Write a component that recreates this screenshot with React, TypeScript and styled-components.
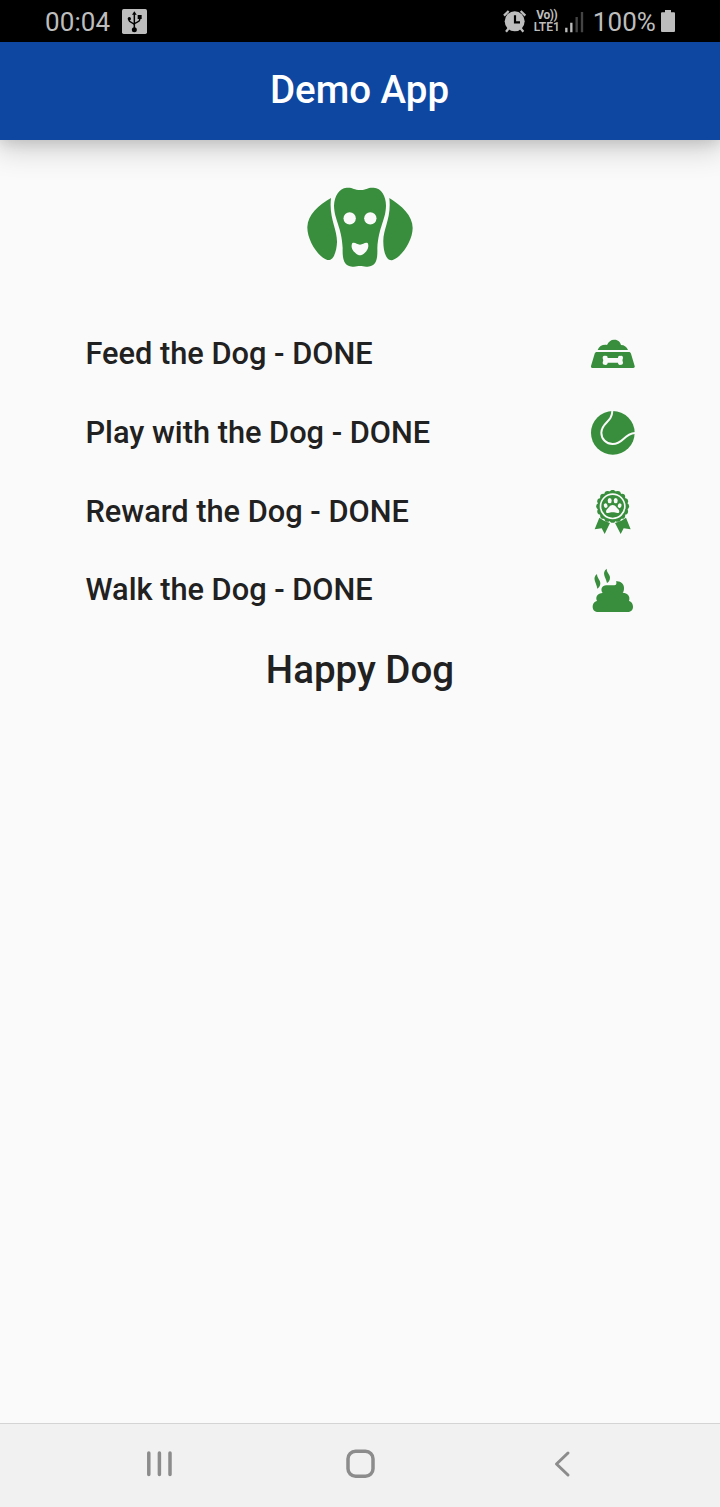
import React from "react";
import styled, { createGlobalStyle } from "styled-components";

const GlobalStyle = createGlobalStyle`
  *, *::before, *::after { box-sizing: border-box; }
  body { margin: 0; background: #fafafa; }
`;

const green = "#388e3c";

const Screen = styled.div`
  display: flex;
  flex-direction: column;
  width: 720px;
  height: 1507px;
  background: #fafafa;
  color: #212121;
  font-family: Roboto, sans-serif;
  overflow: hidden;
`;

const StatusBar = styled.div`
  display: flex;
  align-items: center;
  justify-content: space-between;
  flex: none;
  height: 42px;
  padding: 2px 45px 0 45px;
  background: #000;
  color: #bdbdbd;
`;

const StatusGroup = styled.div`
  display: flex;
  align-items: center;
`;

const StatusText = styled.span`
  font-size: 26px;
  line-height: 40px;
  letter-spacing: ${(p: { $spacing?: string }) => p.$spacing ?? "0"};
`;

const UsbIcon = styled.svg`
  width: 25px;
  height: 25px;
  margin: -1px 0 0 11.5px;
`;

const AlarmIcon = styled.svg`
  width: 24px;
  height: 24px;
  margin: -2px 6px 0 0;
`;

const Carrier = styled.div`
  display: flex;
  flex-direction: column;
  align-items: center;
  width: 28px;
  margin-right: 3px;
  margin-top: -2px;
  font-size: 12px;
  font-weight: 600;
  line-height: 12px;
  white-space: nowrap;
`;

const VoiceLabel = styled.span`
  font-weight: 700;
  letter-spacing: -0.5px;
`;

const SignalIcon = styled.svg`
  width: 20px;
  height: 22px;
  margin: -1px 9px 0 0;
`;

const BatteryIcon = styled.svg`
  width: 14px;
  height: 22px;
  margin: -3px 0 0 5px;
`;

const AppBar = styled.header`
  display: flex;
  align-items: center;
  justify-content: center;
  flex: none;
  height: 98px;
  background: #0d47a1;
  color: #fff;
  box-shadow: 0 3px 12px rgba(0, 0, 0, 0.1), 0 6px 28px 3px rgba(0, 0, 0, 0.19);
  clip-path: inset(0 0 -50px 0);
`;

const Title = styled.h1`
  margin: 0;
  padding: 0 1px 2px 0;
  font-size: 38.5px;
  font-weight: 500;
  line-height: 46px;
`;

const Content = styled.main`
  display: flex;
  flex-direction: column;
  flex: 1;
  padding-top: 34px;
`;

const DogIcon = styled.svg`
  align-self: center;
  width: 140px;
  height: 110px;
`;

const TaskList = styled.ul`
  margin: 30.85px 0 0;
  padding: 0 85px 0 85.5px;
  list-style: none;
`;

const Task = styled.li`
  display: flex;
  align-items: center;
  justify-content: space-between;
  height: 78.75px;
`;

const TaskLabel = styled.span`
  font-size: 30.75px;
  font-weight: 500;
  line-height: 36px;
`;

const TaskIcon = styled.svg`
  width: 44px;
  height: 44px;
  fill: ${green};
`;

const Mood = styled.h2`
  margin: 17.4px 0 0;
  text-align: center;
  font-size: 38.5px;
  font-weight: 500;
  line-height: 46px;
`;

const NavBar = styled.nav`
  display: flex;
  align-items: center;
  justify-content: space-between;
  flex: none;
  height: 84px;
  padding: 0 144px 3px;
  border-top: 1px solid #d4d4d4;
  background: #f1f1f1;
`;

const NavIcon = styled.svg`
  width: 30px;
  height: 30px;
  fill: none;
  stroke: #8c8c8c;
  stroke-width: 3.5;
  stroke-linecap: round;
  stroke-linejoin: round;
`;

const paw = (
  <g fill="#fafafa">
    <path d="M98 74C89 74 86 83 81 87C76 92 78 99 84 98C89 97 92 96 98 96C104 96 107 97 112 98C118 99 120 92 115 87C110 83 107 74 98 74Z" />
    <ellipse cx="89" cy="61" rx="6" ry="8" />
    <ellipse cx="107" cy="61" rx="6" ry="8" />
    <ellipse cx="77" cy="76" rx="5.5" ry="7" transform="rotate(-20 77 76)" />
    <ellipse cx="119" cy="76" rx="5.5" ry="7" transform="rotate(20 119 76)" />
  </g>
);

const scallops = Array.from({ length: 16 }, (_, i) => {
  const a = (i * Math.PI) / 8;
  return <circle key={i} cx={98 + 40 * Math.cos(a)} cy={78 + 40 * Math.sin(a)} r="9.3" />;
});

const tasks = [
  {
    label: "Feed the Dog - DONE",
    viewBox: "33 6 132 132",
    drawing: (
      <>
        <path d="M53 60C57 49 68 43 81 45C86 34 94 28 104 29C114 29 121 36 123 45C133 45 141 51 144 60Z" />
        <path d="M51 66H146C150 66 152 68 153 71L164 108C165 111 163 114 160 114H37C34 114 32 111 33 108L44 71C45 68 47 66 51 66Z" />
        <path
          fill="#fafafa"
          d="M83 84H114C114 78 118 76 122 78C127 76 131 82 128 88C127 90 127 92 128 94C131 100 127 106 122 104C118 106 114 103 114 98H83C83 103 79 106 75 104C70 106 66 100 69 94C70 92 70 90 69 88C66 82 70 76 75 78C79 76 83 78 83 84Z"
        />
      </>
    ),
  },
  {
    label: "Play with the Dog - DONE",
    viewBox: "33 32 132 132",
    drawing: (
      <>
        <circle cx="98.5" cy="97.5" r="65.5" />
        <path
          d="M97 30C97 67 65 65 64 97C64 116 79 131 98 131C131 131 129 101 166 98"
          fill="none"
          stroke="#fafafa"
          strokeWidth="6"
        />
      </>
    ),
  },
  {
    label: "Reward the Dog - DONE",
    viewBox: "33 29 132 132",
    drawing: (
      <>
        <path d="M58 112L72 121L90 128L74 161L65 144L44 147Z" />
        <path d="M138 112L124 121L105 128L122 161L131 144L152 147Z" />
        <circle cx="98" cy="78" r="45" />
        {scallops}
        <circle cx="98" cy="78" r="36.5" fill="none" stroke="#fafafa" strokeWidth="5" />
        {paw}
      </>
    ),
  },
  {
    label: "Walk the Dog - DONE",
    viewBox: "33 24 132 132",
    drawing: (
      <>
        <path d="M108 64C122 62 132 72 132 83C132 90 131 95 128 98C143 98 152 109 147 123C154 124 159 132 159 140C159 150 152 156 142 156H55C45 156 38 150 38 140C38 132 43 124 51 123C45 110 53 100 68 99C60 89 66 76 79 76H103C109 76 111 71 108 64Z" />
        <path d="M51 42C35 55 49 66 52 86C57 83 61 77 61 70C61 60 51 54 51 42Z" />
        <path d="M80 26C64 39 77 50 81 69C86 66 90 60 90 53C90 43 80 38 80 26Z" />
      </>
    ),
  },
];

export default function App() {
  return (
    <>
      <GlobalStyle />
      <Screen>
        <StatusBar>
          <StatusGroup>
            <StatusText $spacing="0.1px">00:04</StatusText>
            <UsbIcon viewBox="366 27 75 75">
              <rect x="366" y="27" width="75" height="75" rx="5" fill="#bdbdbd" />
              <g stroke="#000" strokeWidth="4.5" fill="none">
                <path d="M403 42V86M387 54V61C387 68 403 68 403 75M419 51V60C419 67 403 67 403 73" />
              </g>
              <path d="M403 34L410 44H396Z" />
              <circle cx="403" cy="89" r="7.5" />
              <circle cx="388" cy="56" r="5" />
              <path d="M413 45H425V57H413Z" />
            </UsbIcon>
          </StatusGroup>
          <StatusGroup>
            <AlarmIcon viewBox="38 26 72 72">
              <path d="M47 94L56 83M99 94L90 83" stroke="#bdbdbd" strokeWidth="7" />
              <circle cx="73" cy="63" r="30" fill="#bdbdbd" />
              <path d="M41 46L55 32M105 46L91 32" stroke="#bdbdbd" strokeWidth="7" />
              <path d="M74 45V66H89" fill="none" stroke="#000" strokeWidth="6.5" />
            </AlarmIcon>
            <Carrier>
              <VoiceLabel>Vo))</VoiceLabel>
              <span>LTE1</span>
            </Carrier>
            <SignalIcon viewBox="222 30 60 66">
              <path d="M229 80V94M244 65V94" stroke="#bdbdbd" strokeWidth="7" />
              <path d="M260 48V94M276 33V94" stroke="#444" strokeWidth="7" />
            </SignalIcon>
            <StatusText $spacing="0.1px">100%</StatusText>
            <BatteryIcon viewBox="513 29 42 66">
              <path
                fill="#bdbdbd"
                d="M525 29H543V36H552Q555 36 555 39V92Q555 95 552 95H516Q513 95 513 92V39Q513 36 516 36H525Z"
              />
            </BatteryIcon>
          </StatusGroup>
        </StatusBar>
        <AppBar>
          <Title>Demo App</Title>
        </AppBar>
        <Content>
          <DogIcon viewBox="0 12 420 330">
            <g fill={green}>
              <path d="M123 84C86 104 53 135 52 171C51 209 83 261 112 270C132 274 140 241 141 217C142 177 116 143 123 84Z" />
              <path d="M298 84C335 107 368 137 368 174C368 210 337 260 308 270C288 275 280 242 280 217C278 177 305 145 298 84Z" />
              <path d="M170 53C190 52 191 60 211 60C230 60 231 52 251 53C274 54 288 78 288 107C287 150 266 170 262 234C263 266 260 289 233 290C222 291 218 288 210 288C202 288 198 291 187 290C161 289 157 266 158 234C155 170 133 150 132 107C133 78 147 55 170 53Z" />
            </g>
            <g fill="#fafafa">
              <circle cx="179" cy="145" r="18.5" />
              <circle cx="241" cy="145" r="18.5" />
              <path d="M187 219C196 216 201 224 210 224C219 224 224 216 233 219C238 229 233 240 226 247C221 252 216 256 210 256C204 256 199 252 194 247C186 240 182 229 187 219Z" />
            </g>
          </DogIcon>
          <TaskList>
            {tasks.map((task) => (
              <Task key={task.label}>
                <TaskLabel>{task.label}</TaskLabel>
                <TaskIcon viewBox={task.viewBox}>{task.drawing}</TaskIcon>
              </Task>
            ))}
          </TaskList>
          <Mood>Happy Dog</Mood>
        </Content>
        <NavBar>
          <NavIcon viewBox="0 0 30 30">
            <path d="M4.8 4V25.500M15.400 4V25.500M26 4V25.500" />
          </NavIcon>
          <NavIcon viewBox="0 0 30 30">
            <rect x="3" y="2.300" width="25" height="25" rx="7.5" />
          </NavIcon>
          <NavIcon viewBox="0 0 30 30">
            <path d="M22 4L10.500 15L22 26" strokeWidth="3" />
          </NavIcon>
        </NavBar>
      </Screen>
    </>
  );
}
